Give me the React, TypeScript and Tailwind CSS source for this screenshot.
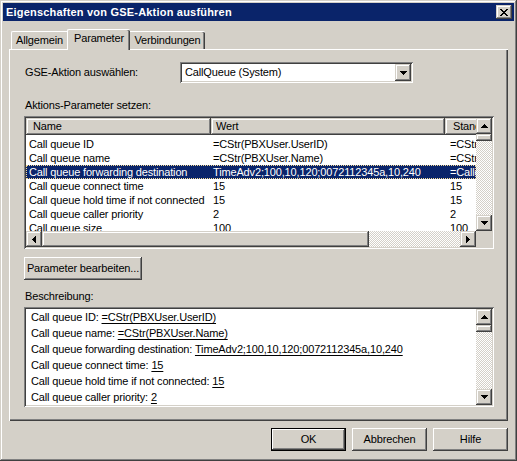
import React from "react";

const RAISED =
  "bg-[#d4d0c8] shadow-[inset_-1px_-1px_#404040,inset_1px_1px_#ffffff,inset_-2px_-2px_#808080,inset_2px_2px_#d4d0c8]";
const SBTN =
  "bg-[#d4d0c8] shadow-[inset_-1px_-1px_#404040,inset_1px_1px_#d4d0c8,inset_-2px_-2px_#808080,inset_2px_2px_#ffffff]";
const SUNKEN =
  "shadow-[inset_1px_1px_#808080,inset_-1px_-1px_#ffffff,inset_2px_2px_#404040,inset_-2px_-2px_#d4d0c8]";
const CHECKER =
  "bg-[image:repeating-conic-gradient(#d4d0c8_0%_25%,#ffffff_0%_50%)] bg-[length:2px_2px]";

function Arrow({ dir }: { dir: "up" | "down" | "left" | "right" }) {
  if (dir === "up" || dir === "down") {
    const rows = dir === "up" ? [0, 1, 2, 3] : [3, 2, 1, 0];
    return (
      <svg width="7" height="4" viewBox="0 0 7 4" shapeRendering="crispEdges">
        {rows.map((r, i) => (
          <rect key={i} x={3 - r} y={i} width={r * 2 + 1} height={1} fill="#000" />
        ))}
      </svg>
    );
  }
  const cols = dir === "left" ? [0, 1, 2, 3] : [3, 2, 1, 0];
  return (
    <svg width="4" height="7" viewBox="0 0 4 7" shapeRendering="crispEdges">
      {cols.map((c, i) => (
        <rect key={i} x={i} y={3 - c} width={1} height={c * 2 + 1} fill="#000" />
      ))}
    </svg>
  );
}

function ScrollBtn({ dir, h = 16 }: { dir: "up" | "down" | "left" | "right"; h?: number }) {
  return (
    <div
      className={`${SBTN} w-[16px] ${h === 17 ? "h-[17px]" : "h-[16px]"} shrink-0 flex items-center justify-center`}
    >
      <Arrow dir={dir} />
    </div>
  );
}

function CloseBtn() {
  const px = [
    [0, 0, 2], [6, 0, 2],
    [1, 1, 2], [5, 1, 2],
    [2, 2, 4],
    [3, 3, 2],
    [2, 4, 4],
    [1, 5, 2], [5, 5, 2],
    [0, 6, 2], [6, 6, 2],
  ];
  return (
    <div className={`${SBTN} w-[16px] h-[14px] flex items-center justify-center`}>
      <svg width="8" height="7" viewBox="0 0 8 7" shapeRendering="crispEdges">
        {px.map(([x, y, w], i) => (
          <rect key={i} x={x} y={y} width={w} height={1} fill="#000" />
        ))}
      </svg>
    </div>
  );
}

function VScroll() {
  return (
    <div className="w-[16px] h-full flex flex-col">
      <ScrollBtn dir="up" />
      <div className={`${SBTN} w-[16px] h-[7px] shrink-0`} />
      <div className={`flex-1 ${CHECKER}`} />
      <ScrollBtn dir="down" />
    </div>
  );
}

const rows: [string, string, string][] = [
  ["Call queue ID", "=CStr(PBXUser.UserID)", "=CStr(PBXUser.UserID)"],
  ["Call queue name", "=CStr(PBXUser.Name)", "=CStr(PBXUser.Name)"],
  ["Call queue forwarding destination", "TimeAdv2;100,10,120;0072112345a,10,240", "=CallerID"],
  ["Call queue connect time", "15", "15"],
  ["Call queue hold time if not connected", "15", "15"],
  ["Call queue caller priority", "2", "2"],
  ["Call queue size", "100", "100"],
];

const desc: [string, string][] = [
  ["Call queue ID: ", "=CStr(PBXUser.UserID)"],
  ["Call queue name: ", "=CStr(PBXUser.Name)"],
  ["Call queue forwarding destination: ", "TimeAdv2;100,10,120;0072112345a,10,240"],
  ["Call queue connect time: ", "15"],
  ["Call queue hold time if not connected: ", "15"],
  ["Call queue caller priority: ", "2"],
  ["Call queue size: ", "100"],
];

function Button({ label, def = false, w = "w-[75px]" }: { label: string; def?: boolean; w?: string }) {
  if (def) {
    return (
      <div className={`${w} h-[23px] border border-black`}>
        <div className={`${RAISED} w-full h-full flex items-center justify-center`}>{label}</div>
      </div>
    );
  }
  return <div className={`${RAISED} ${w} h-[23px] flex items-center justify-center`}>{label}</div>;
}

export default function App() {
  return (
    <div className="w-[517px] h-[461px] bg-[#d4d0c8] p-[3px] flex flex-col font-['Liberation_Sans',Arial,sans-serif] text-[11px] leading-[13px] tracking-[-0.15px] text-black shadow-[inset_-1px_-1px_#404040,inset_1px_1px_#d4d0c8,inset_-2px_-2px_#808080,inset_2px_2px_#ffffff] select-none overflow-hidden">
      {/* Title bar */}
      <div className="h-[18px] bg-[#0a246a] flex items-center justify-between pl-[3px] pr-[2px] shrink-0">
        <span className="text-white font-bold text-[11px] leading-none tracking-[0.2px]">
          Eigenschaften von GSE-Aktion ausführen
        </span>
        <CloseBtn />
      </div>

      {/* Body */}
      <div className="flex flex-col pl-[6px] pr-[6px] pt-[8px]">
        {/* Tabs */}
        <div className="flex items-end h-[20px] pl-[2px]">
          <div className="w-[58px] h-[18px] border-t border-l border-white rounded-tl-[2px] flex items-center justify-center pr-[2px]">
            Allgemein
          </div>
          <div className="relative z-10 -ml-[2px] w-[63px] h-[21px] -mb-px bg-[#d4d0c8] border-t border-l border-white rounded-t-[2px] shadow-[inset_-1px_0_#404040,inset_-2px_0_#808080] flex items-start justify-center pt-[2px]">
            Parameter
          </div>
          <div className="-ml-[2px] w-[77px] h-[18px] border-t border-white rounded-tr-[2px] shadow-[inset_-1px_0_#404040,inset_-2px_0_#808080] flex items-center justify-center pl-[2px]">
            Verbindungen
          </div>
        </div>

        {/* Panel */}
        <div className="h-[372px] border-t border-l border-white shadow-[inset_-1px_-1px_#404040,inset_-2px_-2px_#808080] pl-[14px] pt-[12px] flex flex-col">
          {/* Combo row */}
          <div className="flex items-center h-[21px]">
            <div className="w-[156px] pl-[1px]">GSE-Aktion auswählen:</div>
            <div className={`${SUNKEN} bg-white w-[233px] h-[21px] p-[2px] flex`}>
              <div className="flex-1 flex items-center pl-[3px]">CallQueue (System)</div>
              <ScrollBtn dir="down" h={17} />
            </div>
          </div>

          <div className="mt-[16px] pl-[1px]">Aktions-Parameter setzen:</div>

          {/* List view */}
          <div className={`${SUNKEN} bg-white mt-[4px] w-[470px] h-[133px] p-[2px]`}>
            <div className="grid grid-cols-[450px_16px] grid-rows-[113px_16px] w-full h-full">
              <div className="overflow-hidden flex flex-col">
                {/* header */}
                <div className="flex h-[17px] shrink-0 whitespace-nowrap">
                  <div className={`${SBTN} w-[185px] shrink-0 pl-[7px] flex items-center`}>Name</div>
                  <div className={`${SBTN} w-[234px] shrink-0 pl-[5px] flex items-center`}>Wert</div>
                  <div className={`${SBTN} w-[120px] shrink-0 pl-[8px] flex items-center`}>Standard</div>
                </div>
                <div className="pt-[2px] flex flex-col">
                  {rows.map((r, i) => {
                    const sel = i === 2;
                    return (
                      <div
                        key={i}
                        className={`flex h-[14px] leading-[12px] whitespace-nowrap shrink-0 ${
                          sel
                            ? "bg-[#0a246a] text-white border border-dotted border-[#f5db95]"
                            : "border border-transparent"
                        }`}
                      >
                        <div className="w-[185px] shrink-0 pl-[2px] overflow-hidden">{r[0]}</div>
                        <div className="w-[234px] shrink-0 pl-[1px] overflow-hidden">{r[1]}</div>
                        <div className="w-[120px] shrink-0 pl-[4px] overflow-hidden">{r[2]}</div>
                      </div>
                    );
                  })}
                </div>
              </div>
              <VScroll />
              {/* horizontal scrollbar */}
              <div className="flex h-[16px]">
                <ScrollBtn dir="left" />
                <div className={`${SBTN} w-[327px] h-[16px] shrink-0`} />
                <div className={`flex-1 ${CHECKER}`} />
                <ScrollBtn dir="right" />
              </div>
              <div className="bg-[#d4d0c8]" />
            </div>
          </div>

          <div className="mt-[8px]">
            <Button label="Parameter bearbeiten..." w="w-[118px]" />
          </div>

          <div className="mt-[10px] pl-[1px]">Beschreibung:</div>

          {/* Description */}
          <div className={`${SUNKEN} bg-white mt-[4px] w-[470px] h-[100px] p-[2px] flex`}>
            <div className="flex-1 overflow-hidden pl-[5px] leading-[16px] whitespace-nowrap">
              {desc.map(([k, v], i) => (
                <div key={i}>
                  {k}
                  <span className="underline underline-offset-[2px]">{v}</span>
                </div>
              ))}
            </div>
            <VScroll />
          </div>
        </div>

        {/* Buttons */}
        <div className="flex justify-end gap-[6px] mt-[7px]">
          <Button label="OK" def />
          <Button label="Abbrechen" />
          <Button label="Hilfe" />
        </div>
      </div>
    </div>
  );
}
